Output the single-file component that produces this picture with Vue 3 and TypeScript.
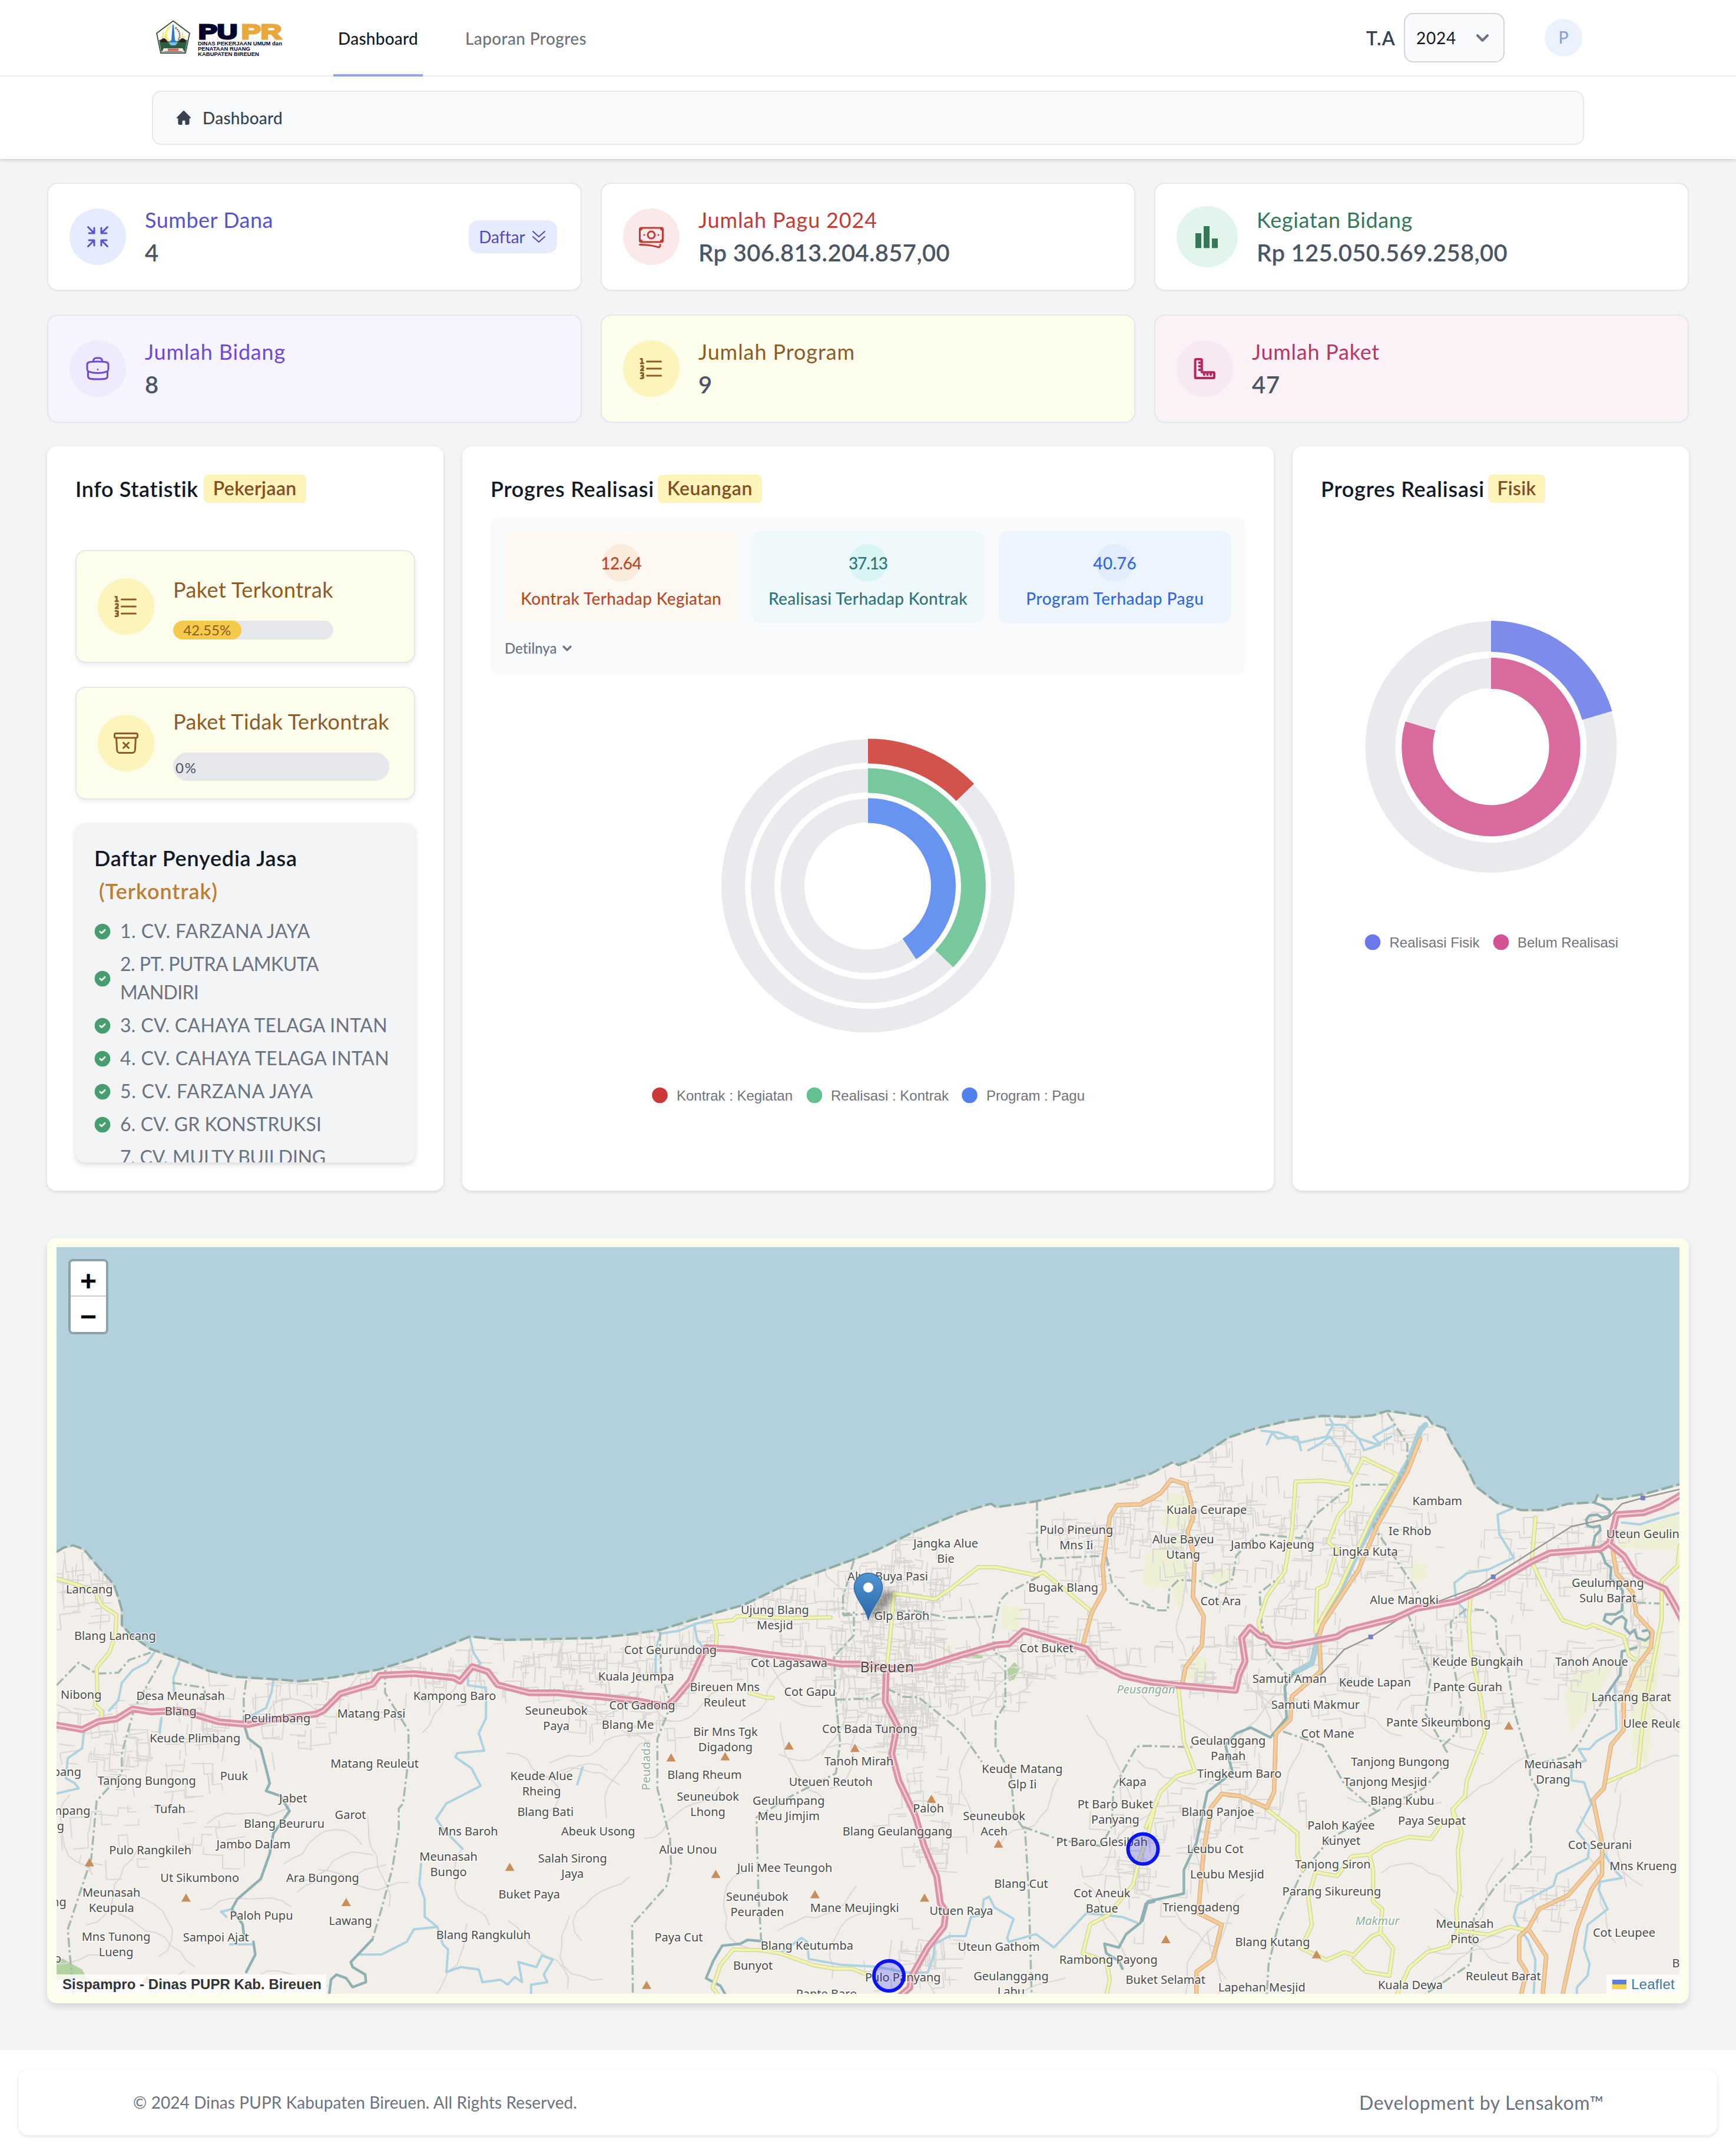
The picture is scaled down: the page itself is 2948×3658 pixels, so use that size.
<script setup lang="ts">
import type { Directive } from 'vue'

/* Spreads a line of text over a given width by adjusting its tracking. */
const vFit: Directive<HTMLElement, number> = {
  mounted(el, binding) {
    const count = (el.textContent ?? '').trim().length
    if (count < 2) return
    const natural = el.getBoundingClientRect().width
    const tracking = (binding.value + 3 - natural) / count
    el.style.letterSpacing = `${tracking.toFixed(3)}px`
  },
}

const icons = {
  shrink:
    'M9 9V4.5M9 9H4.5M9 9 3.75 3.75M9 15v4.5M9 15H4.5M9 15l-5.25 5.25M15 9h4.5M15 9V4.5M15 9l5.25-5.25M15 15h4.5M15 15v4.5m0-4.5 5.25 5.25',
  cash:
    'M2.25 18.75a60.07 60.07 0 0 1 15.797 2.101c.727.198 1.453-.342 1.453-1.096V18.75M3.75 4.5v.75A.75.75 0 0 1 3 6h-.75m0 0v-.375c0-.621.504-1.125 1.125-1.125H20.25M2.25 6v9m18-10.5v.75c0 .414.336.75.75.75h.75m-1.5-1.5h.375c.621 0 1.125.504 1.125 1.125v9.75c0 .621-.504 1.125-1.125 1.125h-.375m1.5-1.5H21a.75.75 0 0 0-.75.75v.75m0 0H3.75m0 0h-.375a1.125 1.125 0 0 1-1.125-1.125V15m1.5 1.5v-.75A.75.75 0 0 0 3 15h-.75M15 10.5a3 3 0 1 1-6 0 3 3 0 0 1 6 0Zm3 0h.008v.008H18V10.5Zm-12 0h.008v.008H6V10.5Z',
  bars: 'M2 9h5v12.6H2ZM9 3h5v18.6H9ZM16 13.5h5v8.1h-5Z',
  case:
    'M20.25 14.15v4.25c0 1.094-.787 2.036-1.872 2.18-2.087.277-4.216.42-6.378.42s-4.291-.143-6.378-.42c-1.085-.144-1.872-1.086-1.872-2.18v-4.25m16.5 0a2.18 2.18 0 0 0 .75-1.661V8.706c0-1.081-.768-2.015-1.837-2.175a48.114 48.114 0 0 0-3.413-.387m4.5 8.006c-.194.165-.42.295-.673.38A23.978 23.978 0 0 1 12 15.75c-2.648 0-5.195-.429-7.577-1.22a2.016 2.016 0 0 1-.673-.38m0 0A2.18 2.18 0 0 1 3 12.489V8.706c0-1.081.768-2.015 1.837-2.175a48.111 48.111 0 0 1 3.413-.387m7.5 0V5.25A2.25 2.25 0 0 0 13.5 3h-3a2.25 2.25 0 0 0-2.25 2.25v.894m7.5 0a48.667 48.667 0 0 0-7.5 0M12 12.75h.008v.008H12v-.008Z',
  list:
    'M8.242 5.992h12m-12 6.003H20.24m-12 5.999h12M4.117 7.495v-3.75H2.99m1.125 3.75H2.99m1.125 0H5.24m-1.92 2.577a1.125 1.125 0 1 1 1.591 1.59l-1.83 1.83h2.16M2.99 15.745h1.125a1.125 1.125 0 0 1 0 2.25H3.74m0-.002h.375a1.125 1.125 0 0 1 0 2.25H2.99',
  archive:
    'm20.25 7.5-.625 10.632a2.25 2.25 0 0 1-2.247 2.118H6.622a2.25 2.25 0 0 1-2.247-2.118L3.75 7.5m6 4.125 2.25 2.25m0 0 2.25 2.25M12 13.875l2.25-2.25M12 13.875l-2.25 2.25M3.375 7.5h17.25c.621 0 1.125-.504 1.125-1.125v-1.5c0-.621-.504-1.125-1.125-1.125H3.375c-.621 0-1.125.504-1.125 1.125v1.5c0 .621.504 1.125 1.125 1.125Z',
  ruler:
    'M4.6 4H8.600a.8.8 0 0 1 .8.8v9.800a.5.5 0 0 0 .5.5h9.300a.8.8 0 0 1 .8.8v3.300a.8.8 0 0 1-.8.8H4.600a.8.8 0 0 1-.8-.8V4.800a.8.8 0 0 1 .8-.8ZM9 7H7.200M9 10H7.200M9 13H7.200M11.400 15.500v1.800M14.200 15.500v1.800M17 15.500v1.800',
}

interface Stat {
  tone: string
  icon: keyof typeof icons
  title: string
  titleW: number
  value: string
  valueW: number
  menu?: boolean
}
const stats: Stat[] = [
  { tone: 'indigo', icon: 'shrink', title: 'Sumber Dana', titleW: 215, value: '4', valueW: 23, menu: true },
  { tone: 'red', icon: 'cash', title: 'Jumlah Pagu 2024', titleW: 301, value: 'Rp 306.813.204.857,00', valueW: 424 },
  { tone: 'green', icon: 'bars', title: 'Kegiatan Bidang', titleW: 262, value: 'Rp 125.050.569.258,00', valueW: 423 },
  { tone: 'purple', icon: 'case', title: 'Jumlah Bidang', titleW: 236, value: '8', valueW: 22 },
  { tone: 'yellow', icon: 'list', title: 'Jumlah Program', titleW: 263, value: '9', valueW: 22 },
  { tone: 'pink', icon: 'ruler', title: 'Jumlah Paket', titleW: 214, value: '47', valueW: 45 },
]

const providers = [
  { lines: [['1. CV. FARZANA JAYA', 320]] },
  { lines: [['2. PT. PUTRA LAMKUTA', 334], ['MANDIRI', 130]] },
  { lines: [['3. CV. CAHAYA TELAGA INTAN', 451]] },
  { lines: [['4. CV. CAHAYA TELAGA INTAN', 454]] },
  { lines: [['5. CV. FARZANA JAYA', 325]] },
  { lines: [['6. CV. GR KONSTRUKSI', 339]] },
  { lines: [['7. CV. MULTY BUILDING', 346]] },
] as { lines: [string, number][] }[]

const tiles = [
  { tone: 'orange', value: '12.64', valueW: 66, label: 'Kontrak Terhadap Kegiatan', labelW: 338 },
  { tone: 'teal', value: '37.13', valueW: 63, label: 'Realisasi Terhadap Kontrak', labelW: 335 },
  { tone: 'blue', value: '40.76', valueW: 71, label: 'Program Terhadap Pagu', labelW: 299 },
]

interface Ring { r: number; w: number; share: number; color: string }
const moneyRings: Ring[] = [
  { r: 229, w: 40, share: 12.8, color: '#d1534c' },
  { r: 179, w: 40, share: 37.13, color: '#78c89e' },
  { r: 128, w: 40, share: 40.76, color: '#6893f0' },
]
const workRings: Ring[] = [
  { r: 188, w: 51, share: 20.4, color: '#7d8beb' },
  { r: 125.2, w: 51, share: 79.6, color: '#d86a9e' },
]
const moneyLegend = [
  { cx: 1120.5, x: 1149, w: 197, text: 'Kontrak : Kegiatan', color: '#cb3a36' },
  { cx: 1383, x: 1411, w: 200, text: 'Realisasi : Kontrak', color: '#64c08f' },
  { cx: 1646.5, x: 1675, w: 167, text: 'Program : Pagu', color: '#5181ed' },
]
const workLegend = [
  { cx: 2331, x: 2359.5, w: 153, text: 'Realisasi Fisik', color: '#6b78ea' },
  { cx: 2549, x: 2577, w: 171, text: 'Belum Realisasi', color: '#d35292' },
]

/* The map is digitised on three overlapping sheets: west, middle, east. */
type Sheet = 'w' | 'm' | 'e'
const sheets: Record<Sheet, [number, number, number, number]> = {
  w: [60, 2080, 1.6333, 1.17015],
  m: [1000, 2400, 1.6333, 1.5373],
  e: [1940, 2380, 1.6333, 1.5077],
}
function place(s: Sheet, x: number, y: number): [number, number] {
  const [ox, oy, kx, ky] = sheets[s]
  return [Math.round((ox + x / kx) * 10) / 10, Math.round((oy + y / ky) * 10) / 10]
}
function trace(s: Sheet, pts: string): string {
  return pts.trim().split(/\s+/).map((p) => {
    const [x, y] = p.split(',').map(Number)
    return place(s, x, y).join(',')
  }).join(' ')
}
type Line = [Sheet, string]
const draw = (lines: Line[]) => lines.map(([s, p]) => trace(s, p))

const coast = [
  trace('w', '59,650 80,641 105,637 135,645 175,680 218,715 232,745 240,765 240,795 265,815 320,843 400,863 480,886 550,898 640,902 735,907 830,899 950,884 1060,860 1130,840 1205,818 1300,825 1560,821'),
  trace('m', '33,585 110,578 200,565 330,527 430,500 570,437 730,383 800,357 900,310 1030,260 1115,236 1130,245 1240,230 1340,208 1450,188 1560,157'),
  trace('e', '33,180 85,155 100,163 150,145 240,92 310,70 400,50 500,37 590,40 640,35 680,24 740,32 790,40 805,58 838,68 860,110 895,160 925,218 985,260 1050,278 1120,278 1180,262 1255,258 1262,240 1280,250 1310,250 1400,235 1490,212'),
].join(' ')
const land = `${coast} 2860,3390 90,3390`

const trunk = [
  [trace('w', '50,993 130,1003 175,987 225,982 270,962 320,968 400,965 450,975 510,988 590,993 640,985 780,972 800,965 845,932 935,913 955,895 1050,892 1160,900 1178,907 1212,878 1255,888 1282,914 1370,930 1450,930 1530,936'),
    trace('m', '20,739 50,742 130,750 215,765 240,745 280,700 310,640 325,612 400,616 500,630 620,643 700,655 760,655 850,668 930,662 1030,632 1130,605 1165,602 1205,568 1250,580 1380,615 1410,650 1480,685 1560,702'),
    trace('e', '30,719 100,727 258,740 268,700 285,665 275,605 298,578 325,600 345,605 360,622 400,626 450,618 540,602 570,585 700,555 760,530 870,512 960,475 1080,410 1130,388 1270,378 1295,362 1305,330 1315,290 1390,285 1440,268 1500,236')].join(' '),
  trace('e', '1295,365 1335,395 1365,440 1400,460 1450,480 1475,520 1500,565'),
  trace('m', '825,668 822,755 855,815 840,890 860,960 905,1050 930,1130 965,1210 975,1280 990,1300 985,1340 940,1395 895,1470 890,1500 865,1520'),
]
const yellow = draw([
  ['w', '55,702 120,716 165,730 185,757 225,775 222,815 205,850 170,880 172,925 165,955 183,965 185,985'],
  ['m', '352,610 355,575 348,545 400,540 410,530 450,530 550,535 670,533'],
  ['m', '828,650 840,540 845,470 960,485 1000,460 1080,402 1130,402 1240,423 1260,415 1320,460 1395,518'],
  ['m', '445,730 490,742 510,743'],
  ['m', '360,1520 343,1500 365,1440 400,1400 480,1402 530,1410 620,1440 680,1450 730,1450 770,1465'],
  ['m', '1568,1035 1548,1110 1525,1170 1510,1230 1440,1310 1390,1335 1370,1410 1435,1430 1445,1480 1435,1520'],
  ['e', '330,600 322,565 345,500 395,435 415,330 425,205 500,203 575,213 612,145 705,187 640,290 600,370 545,480 500,550 480,590 485,480 510,470 540,380 515,360 545,290 575,260 580,213'],
  ['e', '1090,297 1080,410 1115,480 1165,560 1230,580 1250,572 1335,602 1350,650 1365,660'],
  ['e', '910,500 905,560 910,640 925,700 940,770 950,850 900,970 895,1010 860,1045 885,1100 875,1150 880,1250 870,1300 875,1355 960,1365 1020,1345 1070,1355'],
  ['e', '860,1045 865,1075 830,1080 800,1120 740,1115 670,1135 630,1160 580,1165 540,1215 480,1205 460,1270 470,1340 440,1400 510,1430 560,1410 585,1418 635,1370 660,1360 695,1400 685,1470 620,1460 585,1430'],
  ['e', '630,1160 640,1200 640,1280 665,1300 660,1360'],
  ['e', '340,1040 430,1105 430,1160 445,1200'],
  ['e', '100,735 115,870 145,945 95,960 50,1000 10,1090'],
  ['e', '1490,370 1485,420 1440,460 1440,560 1410,700 1390,800 1375,940 1285,975'],
  ['e', '705,1520 740,1450 790,1410 850,1395 875,1355'],
])
const orange = draw([
  ['m', '1568,220 1530,238 1465,240 1445,270 1425,400 1430,460 1395,520 1370,605'],
  ['e', '0,260 50,235 80,200 120,212 135,260 140,300 125,335 145,400 140,500 170,550 165,625 120,680 110,725'],
  ['e', '770,97 735,180 650,320 600,430 500,570 490,600 495,690 440,735 415,755 410,815 370,850 365,1000 345,1040 270,1010 220,1005 190,1040 170,1150 155,1310 220,1340 195,1430 150,1460 150,1520'],
  ['e', '1305,385 1315,440 1360,490 1370,545 1415,590 1410,630 1370,680 1335,760 1335,840 1300,880 1280,990 1250,1020 1275,1130 1275,1165 1180,1265 1100,1300 1070,1350 1045,1370 1045,1430 1065,1460 1050,1520'],
  ['e', '1275,1165 1275,1210 1245,1250 1205,1350 1165,1520'],
  ['e', '1070,1350 1120,1420 1110,1520'],
])
const rivers = draw([
  ['w', '330,850 310,870 270,885 240,910 230,945 205,965'],
  ['w', '135,1005 130,1040 90,1060 85,1100 110,1110 120,1120 59,1130'],
  ['w', '400,868 383,900 385,930'],
  ['w', '350,980 345,1010'],
  ['w', '660,905 655,930 640,960 600,975 580,990'],
  ['w', '545,1360 515,1365 530,1375'],
  ['w', '540,1430 600,1430'],
  ['w', '1205,820 1215,850 1235,872 1200,890 1200,915 1250,920 1250,980 1230,1010 1245,1045 1170,1050 1165,1058 1210,1080 1235,1115 1140,1150 1112,1180 1130,1200 1185,1240'],
  ['w', '1070,1270 1065,1310 1080,1340 1080,1375 1115,1395 1050,1400 1030,1425 960,1450 900,1450'],
  ['w', '1115,1395 1130,1430 1145,1440 1140,1485 1180,1475 1230,1480 1240,1505 1290,1500 1310,1510 1330,1495 1350,1505 1340,1465 1390,1475 1405,1452 1435,1460 1410,1490 1420,1505 1375,1510 1375,1530'],
  ['w', '1518,1078 1503,1112'],
  ['m', '185,680 185,640 190,600 200,575 250,568 295,550 340,540'],
  ['m', '292,550 300,590 315,610'],
  ['m', '530,1410 590,1370 605,1380 610,1425 700,1440 800,1445 880,1460 940,1460 955,1420 960,1385 1000,1365 1045,1365 1060,1315 1090,1310 1095,1270 1110,1262 1125,1290 1178,1320 1160,1370 1165,1380 1240,1360 1290,1395 1380,1305 1480,1315 1520,1330'],
  ['e', '330,75 380,80 440,105 510,90 530,60 560,60 600,95 650,110 690,90'],
  ['e', '345,110 360,80 375,95 430,90 440,125'],
  ['e', '460,125 490,110 520,90 545,120 560,150 580,185'],
  ['e', '510,60 530,60 520,45'],
  ['e', '600,95 615,125 660,110 640,90 700,60'],
  ['e', '1035,270 985,290 990,340 1030,400 960,430 900,440 865,465 870,510 890,530 895,550'],
  ['e', '1490,285 1430,300 1380,315 1330,310'],
  ['e', '1310,720 1315,840 1260,870 1240,890 1210,890 1230,920 1190,930 1190,970 1225,975 1245,1030 1205,1100 1240,1140 1235,1170 1150,1210 1140,1240 1040,1290 1030,1320 1040,1340 1070,1380 1090,1430 1085,1520'],
  ['e', '1275,1150 1310,1200 1330,1220 1270,1230 1265,1250 1290,1300 1235,1340 1225,1400 1240,1440 1235,1470 1205,1500 1205,1520'],
])
const wide = draw([
  ['e', '785,60 770,75 740,150 690,230 640,310 600,380 560,460 520,530 490,570 483,620 470,670 420,695'],
])
const creeks = draw([
  ['w', '578,990 590,1020 625,1040 640,1080 650,1110 640,1125 680,1135 705,1165 660,1210 650,1250 625,1300 560,1340 545,1360 575,1390 580,1420'],
  ['w', '605,1425 610,1450 585,1485'],
  ['w', '935,1420 875,1465 880,1475 915,1490 917,1505 880,1515 862,1497 835,1490 820,1500 815,1530'],
  ['m', '380,1520 365,1495 325,1475 345,1430 370,1390 420,1385 440,1375 480,1378'],
  ['m', '1568,1275 1545,1280 1530,1330 1490,1360 1470,1395 1430,1385 1435,1410 1470,1430 1480,1450'],
  ['e', '420,695 395,730 400,810 355,860 300,835 260,850 230,880 250,950 180,1000 150,1130 115,1200 115,1260 15,1280 0,1330'],
  ['e', '1205,255 1250,258 1280,268 1296,280 1296,292 1275,298 1262,290 1240,292 1231,302 1234,318 1250,322 1268,318 1270,330 1255,345 1250,370 1275,390 1285,415 1300,425 1298,455 1318,465 1332,485 1330,535 1312,545 1285,545 1280,560 1300,570 1312,558 1330,550 1342,560 1338,580 1352,595 1365,585 1372,605 1395,612 1410,600 1405,585 1388,588'],
  ['e', '1370,630 1330,640 1325,700 1280,760'],
])
const borders = draw([
  ['w', '585,905 578,940 578,990'],
  ['w', '970,885 970,930 1035,1005 1035,1060 1020,1150 1008,1160 1008,1200 990,1280 960,1360 935,1420'],
  ['w', '350,865 275,960 240,1050 240,1090 170,1145 155,1260 90,1400 105,1530'],
  ['w', '59,915 120,870 170,892 230,890 260,865 320,850'],
  ['w', '380,910 470,920 470,950'],
  ['m', '197,570 200,680 228,760 190,850 190,980 225,1110 228,1180 215,1235 120,1335 122,1520'],
  ['m', '735,385 705,480 705,525 735,520 735,580 680,635 685,750 697,860 685,940 560,1000 465,1055 470,1250 478,1380'],
  ['m', '705,528 900,515 1000,535 1120,530'],
  ['m', '1243,230 1243,350 1258,380 1435,372 1450,440 1500,495 1568,510'],
  ['m', '1258,380 1250,425 1160,470 1140,490 1120,580 1125,625 1155,640 1155,760 1128,800 1128,870 1170,940 1180,1050 1210,1090 1220,1250 1228,1520'],
  ['m', '685,748 780,745 830,720 870,740 915,742 1030,830 1090,910'],
  ['m', '1205,1080 1310,1115 1420,1130 1450,1080 1455,980 1520,870 1568,868'],
  ['e', '0,510 40,535 70,535 75,480 100,457 160,460 200,478 250,455 260,395 320,340 440,350 480,290 560,230 600,213 700,213'],
  ['e', '680,30 735,110 735,160 640,320 700,400 765,490'],
  ['e', '735,540 800,700 785,800 840,890 850,905'],
  ['e', '395,440 325,490 330,560 345,640 400,700'],
  ['e', '835,880 870,850 885,780 860,660 855,565 900,530 950,535 980,560 985,620 1010,660 1030,790 1075,930 1075,960 1100,1000 1075,1080 1080,1150 980,1240 920,1320 910,1440 830,1490 780,1520'],
  ['e', '390,845 500,880 560,980 650,1050 780,990 840,930'],
  ['e', '650,1050 520,1120 440,1210 380,1330 350,1440 345,1520'],
  ['e', '1280,760 1215,870 1180,910 1080,930'],
  ['e', '0,882 140,885'],
  ['e', '1370,515 1450,518 1490,530'],
])
const rail = draw([
  ['e', '495,700 560,635 635,602 740,540 870,495 930,475 973,448 1190,320 1290,300 1330,262 1388,247 1490,225'],
])
const farms = draw([
  ['e', '75,235 130,240 130,330 50,320'], ['e', '15,390 100,340 130,420 105,540 80,480 15,470'],
  ['e', '740,410 790,420 790,450 745,470'], ['e', '190,430 260,430 250,465 190,465'],
  ['e', '1380,320 1490,290 1490,380 1310,375'], ['e', '1380,600 1440,620 1400,930 1360,900 1350,700'],
  ['e', '130,640 180,660 180,720 120,710'], ['e', '1200,690 1300,680 1260,760 1190,850 1170,750'],
  ['m', '1145,500 1205,510 1190,570 1145,560'], ['m', '1545,370 1568,350 1568,460 1535,440'],
  ['m', '865,590 885,590 880,620 868,620'], ['m', '975,615 1010,600 1005,620 980,630'],
])
const woods = draw([
  ['m', '1160,670 1180,650 1196,665 1180,695 1165,700'], ['w', '59,1460 75,1458 130,1480 145,1500 59,1500'],
  ['m', '1040,630 1095,630 1090,640 1045,640'],
])
const stations = [[633, 603], [973, 449], [1388, 247]].map(([x, y]) => place('e', x, y))
const peaks = ([
  ['w', 150, 1268], ['w', 418, 1338], ['w', 862, 1347], ['w', 1316, 1277], ['w', 310, 1500],
  ['m', 228, 900], ['m', 378, 897], ['m', 555, 869], ['m', 738, 875], ['m', 950, 1008], ['m', 1136, 1125],
  ['m', 352, 1204], ['m', 627, 1257], ['m', 931, 1266], ['m', 160, 1494],
  ['e', 1016, 831], ['e', 65, 1378], ['e', 483, 1417],
] as [Sheet, number, number][]).map(([s, x, y]) => {
  const [px, py] = place(s, x, y)
  return `${px - 8},${py + 6} ${px + 8},${py + 6} ${px},${py - 8}`
})

/* Village lanes: short angled grids around each settlement, from a fixed seed. */
let seed = 20240917
const rnd = () => {
  seed = (seed * 1664525 + 1013904223) % 4294967296
  return seed / 4294967296
}
const towns: [number, number, number, number, number][] = [
  [1510, 2800, 110, 150, 190], [1420, 2730, 160, 50, 45], [1560, 2690, 70, 70, 35], [1530, 2930, 50, 60, 45], [1650, 2860, 110, 60, 45],
  [1200, 2800, 180, 50, 55], [1800, 2790, 120, 60, 50], [1850, 2630, 90, 70, 45], [2020, 2560, 120, 110, 80],
  [2180, 2640, 160, 110, 80], [2080, 2830, 150, 60, 50], [2350, 2620, 100, 90, 35], [2650, 2640, 150, 70, 60],
  [2740, 2820, 90, 90, 40], [2500, 2820, 130, 120, 45], [2260, 2850, 90, 80, 30], [2320, 2440, 90, 40, 30],
  [250, 2960, 150, 90, 65], [130, 2700, 60, 60, 30], [450, 2920, 130, 70, 45], [880, 2830, 160, 50, 60],
  [640, 2870, 120, 60, 35], [1060, 2900, 90, 60, 40], [1580, 3090, 50, 90, 30], [1950, 3150, 80, 120, 45],
  [1560, 3320, 90, 50, 30], [2130, 3060, 90, 80, 30], [2620, 3220, 60, 60, 22], [260, 3130, 160, 70, 25],
]
const lanes: string[] = []
for (const [cx, cy, rx, ry, n] of towns) {
  for (let i = 0; i < n; i++) {
    const a = rnd() * 6.283
    const d = Math.sqrt(rnd())
    let x = cx + Math.cos(a) * rx * d
    let y = cy + Math.sin(a) * ry * d
    let way = (Math.floor(rnd() * 4) * Math.PI) / 2 + (rnd() - 0.5) * 0.3
    let path = `${x.toFixed(0)},${y.toFixed(0)}`
    const steps = 1 + Math.floor(rnd() * 3)
    for (let k = 0; k < steps; k++) {
      const len = 10 + rnd() * 26
      x += Math.cos(way) * len
      y += Math.sin(way) * len
      path += ` ${x.toFixed(0)},${y.toFixed(0)}`
      way += (rnd() < 0.5 ? 1 : -1) * (Math.PI / 2)
    }
    lanes.push(path)
  }
}
for (let i = 0; i < 85; i++) {
  let x = 110 + rnd() * 2720
  let y = 2780 + rnd() * 600
  let way = rnd() * 6.283
  let path = `${x.toFixed(0)},${y.toFixed(0)}`
  for (let k = 0; k < 9; k++) {
    way += (rnd() - 0.5) * 1.2
    x += Math.cos(way) * 18
    y += Math.sin(way) * 18
    path += ` ${x.toFixed(0)},${y.toFixed(0)}`
  }
  lanes.push(path)
}

const names: [Sheet, number, number, string][] = [
  ['w', 150, 724, 'Lancang'], ['w', 221, 817, 'Blang Lancang'], ['w', 127, 934, 'Nibong'],
  ['w', 403, 936, 'Desa Meunasah|Blang'], ['w', 671, 981, 'Peulimbang'], ['w', 932, 971, 'Matang Pasi'],
  ['w', 443, 1020, 'Keude Plimbang'], ['w', 1163, 936, 'Kampong Baro'], ['w', 1445, 965, 'Seuneubok|Paya'],
  ['w', 941, 1071, 'Matang Reuleut'], ['w', 88, 1087, 'pang'], ['w', 309, 1104, 'Tanjong Bungong'],
  ['w', 551, 1095, 'Puuk'], ['w', 715, 1140, 'Jabet'], ['w', 373, 1161, 'Tufah'], ['w', 874, 1173, 'Garot'],
  ['w', 690, 1190, 'Blang Beururu'], ['w', 1404, 1095, 'Keude Alue|Rheing'], ['w', 1415, 1166, 'Blang Bati'],
  ['w', 98, 1164, 'mpang'], ['w', 70, 1195, 'g'], ['w', 1200, 1205, 'Mns Baroh'], ['w', 319, 1243, 'Pulo Rangkileh'],
  ['w', 605, 1231, 'Jambo Dalam'], ['w', 1146, 1256, 'Meunasah|Bungo'], ['w', 1490, 1259, 'Salah Sirong|Jaya'],
  ['w', 1561, 1205, 'Abeuk Usong'], ['w', 456, 1298, 'Ut Sikumbono'], ['w', 797, 1298, 'Ara Bungong'],
  ['w', 1370, 1330, 'Buket Paya'], ['w', 211, 1327, 'Meunasah|Keupula'], ['w', 66, 1346, 'ng'],
  ['w', 627, 1373, 'Paloh Pupu'], ['w', 874, 1383, 'Lawang'], ['w', 224, 1415, 'Mns Tunong|Lueng'],
  ['w', 501, 1416, 'Sampoi Ajat'], ['w', 1243, 1411, 'Blang Rangkuluh'], ['w', 62, 1458, 'o'],
  ['m', 1352, 305, 'Pulo Pineung|Mns Ii'], ['m', 990, 339, 'Jangka Alue|Bie'], ['m', 829, 425, 'Alue Buya Pasi'],
  ['m', 1316, 455, 'Bugak Blang'], ['m', 516, 514, 'Ujung Blang|Mesjid'], ['m', 868, 528, 'Glp Baroh'],
  ['m', 226, 618, 'Cot Geurundong'], ['m', 1269, 613, 'Cot Buket'], ['m', 555, 652, 'Cot Lagasawa'],
  ['m', 131, 687, 'Kuala Jeumpa'], ['m', 377, 715, 'Bireuen Mns|Reuleut'], ['m', 613, 727, 'Cot Gapu'],
  ['m', 148, 763, 'Cot Gadong'], ['m', 108, 813, 'Blang Me'], ['m', 379, 831, 'Bir Mns Tgk|Digadong'],
  ['m', 779, 824, 'Cot Bada Tunong'], ['m', 749, 908, 'Tanoh Mirah'], ['m', 321, 944, 'Blang Rheum'],
  ['m', 671, 962, 'Uteuen Reutoh'], ['m', 1202, 928, 'Keude Matang|Glp Ii'], ['m', 1508, 963, 'Kapa'],
  ['m', 330, 1000, 'Seuneubok|Lhong'], ['m', 554, 1012, 'Geulumpang|Meu Jimjim'], ['m', 942, 1031, 'Paloh'],
  ['m', 1124, 1051, 'Seuneubok|Aceh'], ['m', 1460, 1020, 'Pt Baro Buket|Panyang'],
  ['m', 856, 1092, 'Blang Geulanggang'], ['m', 1423, 1119, 'Pt Baro Glesibah'], ['m', 275, 1139, 'Alue Unou'],
  ['m', 543, 1186, 'Juli Mee Teungoh'], ['m', 1199, 1228, 'Blang Cut'], ['m', 1423, 1253, 'Cot Aneuk|Batue'],
  ['m', 467, 1262, 'Seuneubok|Peuraden'], ['m', 737, 1291, 'Mane Meujingki'], ['m', 1033, 1299, 'Utuen Raya'],
  ['m', 249, 1368, 'Paya Cut'], ['m', 1137, 1392, 'Uteun Gathom'], ['m', 605, 1389, 'Blang Keutumba'],
  ['m', 455, 1442, 'Bunyot'], ['m', 1441, 1426, 'Rambong Payong'], ['m', 871, 1473, 'Pulo Panyang'],
  ['m', 1171, 1470, 'Geulanggang|Labu'], ['m', 659, 1515, 'Pante Baro'],
  ['e', 64, 1481, 'Buket Selamat'], ['e', 818, 255, 'Kambam'], ['e', 178, 277, 'Kuala Ceurape'],
  ['e', 742, 331, 'Ie Rhob'], ['e', 113, 352, 'Alue Bayeu|Utang'], ['e', 361, 367, 'Jambo Kajeung'],
  ['e', 618, 384, 'Lingka Kuta'], ['e', 1388, 339, 'Uteun Geulin'], ['e', 1291, 464, 'Geulumpang|Sulu Barat'],
  ['e', 217, 511, 'Cot Ara'], ['e', 726, 508, 'Alue Mangki'], ['e', 930, 667, 'Keude Bungkaih'],
  ['e', 1246, 666, 'Tanoh Anoue'], ['e', 408, 710, 'Samuti Aman'], ['e', 645, 719, 'Keude Lapan'],
  ['e', 902, 731, 'Pante Gurah'], ['e', 1356, 757, 'Lancang Barat'], ['e', 480, 777, 'Samuti Makmur'],
  ['e', 821, 821, 'Pante Sikeumbong'], ['e', 1415, 825, 'Ulee Reule'], ['e', 514, 850, 'Cot Mane'],
  ['e', 238, 868, 'Geulanggang|Panah'], ['e', 715, 922, 'Tanjong Bungong'], ['e', 1139, 929, 'Meunasah|Drang'],
  ['e', 269, 953, 'Tingkeum Baro'], ['e', 674, 974, 'Tanjong Mesjid'], ['e', 721, 1022, 'Blang Kubu'],
  ['e', 209, 1051, 'Blang Panjoe'], ['e', 803, 1073, 'Paya Seupat'], ['e', 551, 1086, 'Paloh Kayee|Kunyet'],
  ['e', 1269, 1135, 'Cot Seurani'], ['e', 202, 1146, 'Leubu Cot'], ['e', 528, 1185, 'Tanjong Siron'],
  ['e', 1389, 1189, 'Mns Krueng'], ['e', 235, 1210, 'Leubu Mesjid'], ['e', 525, 1254, 'Parang Sikureung'],
  ['e', 163, 1295, 'Trienggadeng'], ['e', 894, 1337, 'Meunasah|Pinto'], ['e', 1336, 1360, 'Cot Leupee'],
  ['e', 361, 1384, 'Blang Kutang'], ['e', 1001, 1472, 'Reuleut Barat'], ['e', 743, 1494, 'Kuala Dewa'],
  ['e', 331, 1500, 'Lapehan Mesjid'], ['e', 1480, 1438, 'B'],
]
const labels = names.flatMap(([s, x, y, text]) => {
  const [px, py] = place(s, x, y)
  return text.split('|').map((t, i) => ({ x: px, y: py + 7 + i * 26, t }))
})
</script>

<template>
  <div class="page">
    <header class="top">
      <nav class="nav">
        <div class="logo">
          <svg class="crest" viewBox="0 0 60 58">
            <path d="M30 1.500 58 22.500 51 56H9L2 22.500Z" fill="#fdfdf8" stroke="#35503c" stroke-width="1.800" />
            <path d="M6 34q12-3 20 4h8q8-7 20-4l-4 20H10Z" fill="#2f5d3f" />
            <path d="M9 36a5 5 0 0 1 10 0v2H9ZM41 36a5 5 0 0 1 10 0v2H41Z" fill="#2a2023" />
            <path d="M26 10c-9 8-10 18-3 26-8-4-9-17 3-26Z" fill="#f4ef60" stroke="#f4ef60" stroke-width="2" />
            <path d="M9 29h9M40 29h11M13 21v8M46 21v8" stroke="#efe47a" stroke-width="2" />
            <path d="M34 13c7 6 9 12 5 21" fill="none" stroke="#4c5148" stroke-width="2.500" stroke-dasharray="2 1.500" />
            <path d="M29 8h2l2 26 5 4H22l5-4Z" fill="#2d78c8" />
            <path d="M22 38h16l-4 5h-8Z" fill="#7cc0e8" />
            <path d="M14 48h32l3 6-6-1H17l-6 1Z" fill="#f3e9e6" />
            <path d="M21 48.500h18v4H21Z" fill="#d8605c" />
          </svg>
          <svg class="wordmark" viewBox="336 34 148 64">
            <text class="w-big" x="337" y="66" textLength="66" lengthAdjust="spacingAndGlyphs" fill="#02022b" stroke="#02022b">PU</text>
            <text class="w-big" x="410" y="66" textLength="68" lengthAdjust="spacingAndGlyphs" fill="#e9a83c" stroke="#e9a83c">PR</text>
            <text class="w-small" x="336" y="77" textLength="143" lengthAdjust="spacingAndGlyphs">DINAS PEKERJAAN UMUM dan</text>
            <text class="w-small" x="336" y="86" textLength="89" lengthAdjust="spacingAndGlyphs">PENATAAN RUANG</text>
            <text class="w-small" x="336" y="95" textLength="104" lengthAdjust="spacingAndGlyphs">KABUPATEN BIREUEN</text>
          </svg>
        </div>
        <a class="link active"><span v-fit="133">Dashboard</span></a>
        <a class="link"><span v-fit="203">Laporan Progres</span></a>
        <div class="tools">
          <span class="year-label"><span v-fit="47">T.A</span></span>
          <div class="select">
            <span v-fit="65">2024</span>
            <svg viewBox="0 0 20 12"><path d="m2 2 8 8 8-8" fill="none" stroke="#6b7280" stroke-width="4" stroke-linecap="round" stroke-linejoin="round" /></svg>
          </div>
          <div class="avatar">P</div>
        </div>
      </nav>
      <div class="crumb-row">
        <div class="crumb">
          <svg viewBox="0 0 20 20" fill="#374151">
            <path d="m19.707 9.293-2-2-7-7a1 1 0 0 0-1.414 0l-7 7-2 2a1 1 0 0 0 1.414 1.414L2 10.414V18a2 2 0 0 0 2 2h3a1 1 0 0 0 1-1v-4a1 1 0 0 1 1-1h2a1 1 0 0 1 1 1v4a1 1 0 0 0 1 1h3a2 2 0 0 0 2-2v-7.586l.293.293a1 1 0 0 0 1.414-1.414Z" />
          </svg>
          <span v-fit="133">Dashboard</span>
        </div>
      </div>
    </header>

    <main class="main">
      <section class="stats">
        <article v-for="s in stats" :key="s.title" class="stat" :class="s.tone">
          <div class="dot">
            <svg v-if="s.icon === 'bars'" viewBox="0 0 24 24" fill="currentColor"><path :d="icons.bars" /></svg>
            <svg v-else viewBox="0 0 24 24" class="line-icon"><path :d="icons[s.icon]" /></svg>
          </div>
          <div class="stat-text">
            <div class="stat-title"><span v-fit="s.titleW">{{ s.title }}</span></div>
            <div class="stat-value"><span v-fit="s.valueW">{{ s.value }}</span></div>
          </div>
          <button v-if="s.menu" class="menu-btn">
            <span v-fit="75">Daftar</span>
            <svg viewBox="0 0 24 22"><path d="m2 2 10 9 10-9M2 11l10 9 10-9" fill="none" stroke="currentColor" stroke-width="2" stroke-linecap="round" stroke-linejoin="round" /></svg>
          </button>
        </article>
      </section>

      <section class="panels">
        <article class="panel">
          <h2><span v-fit="207">Info Statistik</span><em class="b1"><span v-fit="139">Pekerjaan</span></em></h2>
          <div class="pack first">
            <div class="dot"><svg viewBox="0 0 24 24" class="line-icon"><path :d="icons.list" /></svg></div>
            <div class="pack-text">
              <div class="pack-title"><span v-fit="269">Paket Terkontrak</span></div>
              <div class="meter"><div class="fill" style="width: 42.55%"><span v-fit="78">42.55%</span></div></div>
            </div>
          </div>
          <div class="pack">
            <div class="dot"><svg viewBox="0 0 24 24" class="line-icon"><path :d="icons.archive" /></svg></div>
            <div class="pack-text">
              <div class="pack-title"><span v-fit="364">Paket Tidak Terkontrak</span></div>
              <div class="meter tall"><span v-fit="34">0%</span></div>
            </div>
          </div>
          <div class="vendors">
            <h3><span v-fit="341">Daftar Penyedia Jasa</span></h3>
            <h3 class="sub"><span v-fit="199">(Terkontrak)</span></h3>
            <ul>
              <li v-for="p in providers" :key="p.lines[0][0]">
                <svg viewBox="0 0 20 20" fill="#479c70"><path d="M10 .5a9.500 9.500 0 1 0 9.500 9.500A9.510 9.510 0 0 0 10 .5Zm3.707 8.207-4 4a1 1 0 0 1-1.414 0l-2-2a1 1 0 0 1 1.414-1.414L9 10.586l3.293-3.293a1 1 0 0 1 1.414 1.414Z" /></svg>
                <div><div v-for="l in p.lines" :key="l[0]" class="vendor-line"><span v-fit="l[1]">{{ l[0] }}</span></div></div>
              </li>
            </ul>
          </div>
        </article>

        <article class="panel">
          <h2><span v-fit="275">Progres Realisasi</span><em class="b2"><span v-fit="142">Keuangan</span></em></h2>
          <div class="summary">
            <div class="tiles">
              <div v-for="t in tiles" :key="t.label" class="tile" :class="t.tone">
                <div class="num"><span v-fit="t.valueW">{{ t.value }}</span></div>
                <div class="tile-label"><span v-fit="t.labelW">{{ t.label }}</span></div>
              </div>
            </div>
            <div class="more">
              <span v-fit="86">Detilnya</span>
              <svg viewBox="0 0 16 11"><path d="m2 2 6 6 6-6" fill="none" stroke="currentColor" stroke-width="3.200" stroke-linecap="round" stroke-linejoin="round" /></svg>
            </div>
          </div>
          <svg class="chart wide-chart" viewBox="833 1146 1282 828">
            <g transform="rotate(-90 1474 1504.500)" fill="none">
              <template v-for="r in moneyRings" :key="r.r">
                <circle cx="1474" cy="1504.500" :r="r.r" stroke="#e9eaee" :stroke-width="r.w" />
                <circle cx="1474" cy="1504.500" :r="r.r" :stroke="r.color" :stroke-width="r.w + 2" pathLength="100" :stroke-dasharray="`${r.share} 100`" />
              </template>
            </g>
            <g v-for="l in moneyLegend" :key="l.text">
              <circle :cx="l.cx" cy="1860" r="13.300" :fill="l.color" />
              <text class="legend" :x="l.x" y="1868.500" :textLength="l.w">{{ l.text }}</text>
            </g>
          </svg>
        </article>

        <article class="panel">
          <h2><span v-fit="275">Progres Realisasi</span><em class="b3"><span v-fit="63">Fisik</span></em></h2>
          <svg class="chart side-chart" viewBox="2243 854 577 846">
            <g transform="rotate(-90 2532 1268.500)" fill="none">
              <template v-for="r in workRings" :key="r.r">
                <circle cx="2532" cy="1268.500" :r="r.r" stroke="#e9eaee" :stroke-width="r.w" />
                <circle cx="2532" cy="1268.500" :r="r.r" :stroke="r.color" :stroke-width="r.w + 2" pathLength="100" :stroke-dasharray="`${r.share} 100`" />
              </template>
            </g>
            <g v-for="l in workLegend" :key="l.text">
              <circle :cx="l.cx" cy="1600" r="13.300" :fill="l.color" />
              <text class="legend" :x="l.x" y="1608.500" :textLength="l.w">{{ l.text }}</text>
            </g>
          </svg>
        </article>
      </section>

      <section class="map-card">
        <div class="map">
          <svg class="canvas" viewBox="96 2118 2756 1268">
            <defs>
              <clipPath id="land"><polygon :points="land" /></clipPath>
              <linearGradient id="pin" x1="0" y1="0" x2="0" y2="1"><stop offset="0" stop-color="#4f95cf" /><stop offset="1" stop-color="#2a65ae" /></linearGradient>
              <filter id="soft" x="-50%" y="-50%" width="200%" height="200%"><feGaussianBlur stdDeviation="5" /></filter>
            </defs>
            <rect x="96" y="2118" width="2756" height="1268" fill="#b2d1dc" />
            <polygon :points="land" fill="#f2efea" />
            <g clip-path="url(#land)">
              <polygon v-for="(p, i) in farms" :key="'f' + i" :points="p" fill="#eef0d5" />
              <polygon v-for="(p, i) in woods" :key="'g' + i" :points="p" fill="#b3d2a2" />
              <g class="ln">
                <polyline v-for="(p, i) in lanes" :key="'l' + i" :points="p" stroke="#dad8d6" stroke-width="2" />
                <polyline v-for="(p, i) in rivers" :key="'r' + i" :points="p" stroke="#aed2df" stroke-width="4" />
                <polyline v-for="(p, i) in wide" :key="'w' + i" :points="p" stroke="#aacfdb" stroke-width="10" />
                <polyline v-for="(p, i) in creeks" :key="'c' + i" :points="p" stroke="#8fb1b3" stroke-width="4.500" />
              </g>
            </g>
            <g class="ln">
              <polyline v-for="(p, i) in borders" :key="'b' + i" :points="p" stroke="#a6b9b1" stroke-width="3.500" stroke-dasharray="16 5 4 5" />
              <polyline :points="coast" stroke="#c4d5d2" stroke-width="4" />
              <polyline :points="coast" stroke="#8faba5" stroke-width="4" stroke-dasharray="20 6" />
              <polyline v-for="(p, i) in yellow" :key="'y' + i" :points="p" stroke="#cdd39a" stroke-width="7" />
              <polyline v-for="(p, i) in yellow" :key="'yy' + i" :points="p" stroke="#f2f3ae" stroke-width="4.500" />
              <polyline v-for="(p, i) in orange" :key="'o' + i" :points="p" stroke="#dcae7c" stroke-width="7.500" />
              <polyline v-for="(p, i) in orange" :key="'oo' + i" :points="p" stroke="#f2cc9a" stroke-width="5" />
              <polyline v-for="(p, i) in rail" :key="'ra' + i" :points="p" stroke="#999795" stroke-width="2.500" />
              <polyline v-for="(p, i) in trunk" :key="'t' + i" :points="p" stroke="#dd93a6" stroke-width="11.500" />
              <polyline v-for="(p, i) in trunk" :key="'tt' + i" :points="p" stroke="#f1d3da" stroke-width="2.500" />
            </g>
            <rect v-for="(s, i) in stations" :key="'s' + i" :x="s[0] - 4" :y="s[1] - 4" width="8" height="8" fill="#7b7fbd" />
            <polygon v-for="(p, i) in peaks" :key="'p' + i" :points="p" fill="#c88f5c" />
            <g class="names">
              <text v-for="(l, i) in labels" :key="'n' + i" :x="l.x" :y="l.y">{{ l.t }}</text>
              <text class="city" x="1506.300" y="2840">Bireuen</text>
              <text class="area" x="1946" y="2875.500">Peusangan</text>
              <text class="area" x="2339" y="3269">Makmur</text>
              <text class="area up" transform="translate(1103.500 2999) rotate(-90)">Peudada</text>
            </g>
            <path d="M1475 2750l14-36q22-22 30-8-4 20-44 44Z" fill="#000" opacity=".35" filter="url(#soft)" />
            <path d="M1474.500 2751C1471 2731 1450.500 2714 1450.500 2695.500a24 24 0 0 1 48 0C1498.500 2714 1478 2731 1474.500 2751Z" fill="url(#pin)" stroke="#2f6ca8" stroke-width="1.500" />
            <circle cx="1474.500" cy="2679.500" r="0" />
            <circle cx="1474.500" cy="2696" r="8.500" fill="#fff" />
            <g fill="#0000ff" fill-opacity=".2" stroke="#0a14f0" stroke-width="6">
              <circle cx="1941" cy="3140" r="25.500" />
              <circle cx="1509.500" cy="3355.500" r="25.500" />
            </g>
          </svg>
          <div class="zoom">
            <a>+</a>
            <a>−</a>
          </div>
          <div class="credit"><span v-fit="437">Sispampro - Dinas PUPR Kab. Bireuen</span></div>
          <div class="leaflet"><i></i><span v-fit="71">Leaflet</span></div>
        </div>
      </section>
    </main>

    <footer class="foot">
      <div class="foot-card">
        <span class="copy"><span v-fit="751">© 2024 Dinas PUPR Kabupaten Bireuen. All Rights Reserved.</span></span>
        <span class="dev"><span v-fit="413">Development by Lensakom™</span></span>
      </div>
    </footer>
  </div>
</template>

<style>
html,
body {
  margin: 0;
  background: #fff;
}
</style>

<style scoped>
.page {
  width: 2948px;
  height: 3658px;
  overflow: hidden;
  background: #f3f4f6;
  font-family: Lato, 'Open Sans', sans-serif;
  color: #111827;
  display: flex;
  flex-direction: column;
}
.page * { box-sizing: border-box; }
span { white-space: nowrap; display: inline-block; }
svg { display: block; flex: none; }
.line-icon path { fill: none; stroke: currentColor; stroke-width: 1.5; stroke-linecap: round; stroke-linejoin: round; }
.pink .line-icon path { stroke-width: 2; stroke: #b52a5e; }

.top { height: 270px; flex: none; background: #fff; box-shadow: 0 2px 6px rgba(0, 0, 0, .16); position: relative; z-index: 1; }
.nav { height: 130px; border-bottom: 2px solid #ededf0; display: flex; padding: 0 258px 0 264px; align-items: flex-start; font-size: 28px; font-weight: 500; }
.logo { display: flex; gap: 12px; padding-top: 34px; width: 302px; }
.crest { width: 60px; height: 58px; }
.wordmark { width: 148px; height: 64px; overflow: visible; }
.w-big { font: bold 35px 'Liberation Sans', sans-serif; stroke-width: 3; }
.w-small { font: bold 9.5px 'Liberation Sans', sans-serif; fill: #02022b; }
.link { height: 130px; line-height: 130px; padding: 0 8px; margin-right: 64px; color: #6b7280; }
.link.active { color: #111827; border-bottom: 4px solid #93a3f3; }
.tools { margin-left: auto; height: 128px; display: flex; align-items: center; }
.year-label { font-size: 32px; font-weight: 600; color: #374151; margin-right: 14px; }
.select { width: 171px; height: 84px; border: 2px solid #d1d5db; border-radius: 16px; background: #f9fafb; display: flex; align-items: center; justify-content: space-between; padding: 0 25px 0 19px; font-weight: 400; }
.select svg { width: 21px; height: 13px; }
.avatar { width: 64px; height: 64px; margin-left: 68px; margin-right: 3px; border-radius: 50%; background: #ebf2fd; color: #8b9ce9; text-align: center; line-height: 63px; }
.crumb-row { padding: 24px 258px; }
.crumb { height: 92px; border: 2px solid #e5e7eb; border-radius: 16px; background: #f9fafb; display: flex; align-items: center; gap: 20px; padding-left: 40px; font-size: 28px; font-weight: 500; color: #374151; }
.crumb svg { width: 24px; height: 24px; }

.main { padding: 40px 80px 80px; height: 3212px; flex: none; }
.stats { display: grid; grid-template-columns: repeat(3, 908px); gap: 40px 32px; }
.stat { height: 184px; border: 2px solid #e5e7eb; border-radius: 18px; background: #fff; display: flex; align-items: center; padding: 0 40px 0 36px; box-shadow: 0 2px 4px rgba(0, 0, 0, .02); }
.dot { width: 96px; height: 96px; border-radius: 50%; display: flex; align-items: center; justify-content: center; flex: none; }
.dot svg { width: 48px; height: 48px; }
.stat-text { margin-left: 32px; }
.stat-title, .stat-value { line-height: 54px; height: 56px; font-size: 36px; }
.stat-value { font-size: 40px; font-weight: 600; color: #4b5563; }
.indigo { color: #5552d6; }
.indigo .dot { background: #e6ebfd; }
.red { color: #c43a34; }
.red .dot { background: #fbe8e8; }
.green { color: #347857; }
.green .dot { width: 104px; height: 104px; background: #e1f5ec; }
.purple { color: #7048d8; background: #f6f4fe; }
.purple .dot { background: #eeebfd; }
.yellow { color: #8e5b26; background: #fcfdeb; }
.yellow .dot { background: #fcf4bb; }
.pink { color: #b83567; background: #fbf2f8; }
.pink .dot { background: #f8e8f1; }
.menu-btn { margin-left: auto; margin-right: 0; width: 150px; height: 56px; border: 0; border-radius: 16px; background: #e6ebfd; color: #5449b8; font: 400 28px Lato, sans-serif; display: flex; align-items: center; justify-content: center; gap: 11px; padding: 0 2px 0 0; }
.menu-btn svg { width: 24px; height: 22px; }

.panels { display: grid; grid-template-columns: 673px 1378px 673px; gap: 32px; margin-top: 40px; }
.panel { height: 1264px; background: #fff; border-radius: 16px; padding: 48px; box-shadow: 0 2px 6px rgba(0, 0, 0, .12); }
h2, h3 { margin: 0; font-weight: 600; font-size: 36px; }
h2 { height: 48px; display: flex; align-items: center; gap: 6px; }
h2 em { font-style: normal; font-size: 32px; height: 48px; line-height: 46px; border-radius: 8px; background: #fcf4bb; color: #854d22; display: flex; justify-content: center; }
h2 .b1 { width: 174px; margin-left: 3px; }
.b2 { width: 177px; }
.b3 { width: 97px; }

.pack { width: 577px; height: 192px; margin-top: 40px; border: 2px solid #e5e7eb; border-radius: 18px; background: #fcfdeb; box-shadow: 0 4px 8px rgba(0, 0, 0, .07); display: flex; align-items: center; padding-left: 36px; color: #8e5b26; }
.pack.first { margin-top: 80px; }
.pack .dot { background: #fcf4bb; }
.pack-text { margin-left: 32px; }
.pack-title { font-size: 36px; line-height: 54px; height: 56px; }
.meter { height: 32px; margin-top: 24px; border-radius: 16px; background: #e5e7eb; font-size: 24px; line-height: 31px; overflow: hidden; }
.meter.tall { height: 48px; border-radius: 24px; padding: 5px 0 0 4px; line-height: 42px; color: #4b5563; margin-top: 24px; }
.fill { height: 32px; border-radius: 16px; background: #f3ca4a; text-align: center; }

.vendors { width: 577px; height: 576px; margin-top: 40px; border-radius: 16px; background: #f3f4f6; box-shadow: 0 4px 10px rgba(0, 0, 0, .14); overflow: hidden; padding: 31px 32px; }
h3 { height: 56px; line-height: 56px; }
h3.sub { color: #bd7f2f; padding-left: 8px; }
ul { list-style: none; margin: 17px 0 0; padding: 0; display: flex; flex-direction: column; gap: 8px; }
li { display: flex; align-items: center; gap: 16px; color: #6b7280; font-size: 32px; }
li svg { width: 28px; height: 28px; }
li:last-child { align-items: flex-start; height: 96px; }
li:last-child svg { margin-top: 34px; }
.vendor-line { height: 48px; line-height: 46px; }

.summary { margin-top: 24px; height: 268px; padding: 24px; border-radius: 16px; background: #f9fafb; }
.tiles { display: grid; grid-template-columns: repeat(3, 1fr); gap: 24px; }
.tile { height: 156px; border-radius: 16px; padding-top: 22px; display: flex; flex-direction: column; align-items: center; font-size: 28px; font-weight: 500; }
.num { width: 64px; height: 64px; border-radius: 50%; display: flex; align-items: center; justify-content: center; line-height: 62px; }
.num span { flex: none; }
.tile-label { margin-top: 9px; line-height: 38px; }
.orange { background: #fdf8f2; color: #bb4824; }
.orange .num { background: #faebdd; }
.teal { background: #eff9fb; color: #2f7377; }
.teal .num { background: #d9f4f4; }
.blue { background: #ecf5fe; color: #3267e0; }
.blue .num { background: #e1edfb; }
.more { margin-top: 27px; display: flex; align-items: center; gap: 9px; font-size: 24px; line-height: 32px; font-weight: 500; color: #6b7280; }
.more svg { width: 16px; height: 11px; }
.wide-chart { width: 1282px; height: 828px; }
.side-chart { width: 577px; height: 846px; }
.legend { font: 24px 'Liberation Sans', sans-serif; fill: #6f737e; }

.map-card { margin-top: 80px; height: 1300px; padding: 16px; border-radius: 16px; background: #fcfdeb; box-shadow: 0 6px 12px rgba(0, 0, 0, .12); }
.map { position: relative; height: 1268px; overflow: hidden; }
.canvas { width: 2756px; height: 1268px; }
.ln polyline { fill: none; stroke-linejoin: round; stroke-linecap: round; }
.ln polyline[stroke-dasharray] { stroke-linecap: butt; }
.names text { font: 20px 'Noto Sans', sans-serif; text-anchor: middle; fill: #4a4a4a; stroke: rgba(255, 255, 255, .7); stroke-width: 3px; paint-order: stroke; }
.names .city { font-size: 25px; }
.names .area { font-style: italic; fill: #8fae9e; }
.names .up { font-style: normal; }
.zoom { position: absolute; left: 20px; top: 20px; width: 68px; height: 128px; border: 4px solid rgba(0, 0, 0, .22); border-radius: 8px; background: #fff; background-clip: padding-box; font: bold 48px 'Liberation Sans', sans-serif; color: #000; text-align: center; }
.zoom a { display: block; height: 60px; line-height: 68px; }
.zoom a:first-child { border-bottom: 2px solid #ccc; }
.credit, .leaflet { position: absolute; bottom: 0; height: 33px; line-height: 33px; background: rgba(255, 255, 255, .8); font: 24px/33px 'Liberation Sans', sans-serif; }
.credit { left: 0; padding: 0 8px 0 10px; font-weight: bold; color: #333; }
.leaflet { right: 0; padding: 0 8px 0 10px; color: #3a7aa6; display: flex; align-items: center; gap: 8px; }
.leaflet i { width: 24px; height: 16px; background: linear-gradient(#5b80dc 50%, #f6d24a 50%); }

.foot { height: 176px; flex: none; background: #fff; padding: 32px; }
.foot-card { height: 112px; border-radius: 16px; background: #fff; box-shadow: 0 2px 6px rgba(0, 0, 0, .12); padding: 0 192px 0 194px; display: flex; align-items: center; justify-content: space-between; color: #6b7280; font-size: 28px; }
.dev { font-size: 32px; }
</style>
